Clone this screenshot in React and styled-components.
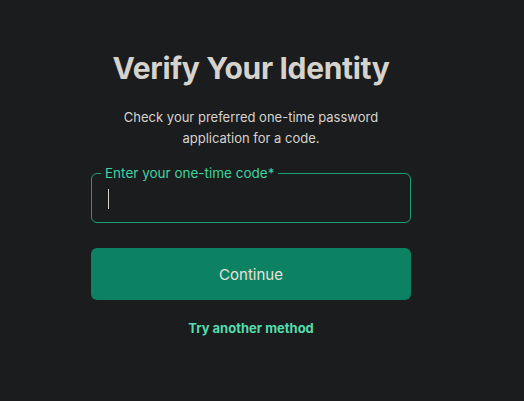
import React from "react";
import styled, { createGlobalStyle } from "styled-components";

const Global = createGlobalStyle`
  html, body {
    margin: 0;
    padding: 0;
    background: #1b1c1e;
    font-family: Inter, "Noto Sans", "Liberation Sans", sans-serif;
  }
`;

const Page = styled.main`
  min-height: 401px;
  display: flex;
  justify-content: center;
  padding-right: 22px;
  box-sizing: border-box;
`;

const Card = styled.section`
  width: 320px;
  display: flex;
  flex-direction: column;
  align-items: center;
  padding-top: 48px;
`;

const Title = styled.h1`
  margin: 0;
  font-size: 30px;
  font-weight: 700;
  line-height: 40px;
  color: #d6d3cd;
  letter-spacing: -0.35px;
`;

const Lead = styled.p`
  margin: 19px 0 0;
  font-size: 13px;
  line-height: 21px;
  color: #d6d3cd;
  text-align: center;
  width: 270px;
`;

const Field = styled.div`
  position: relative;
  margin-top: 24px;
  padding: 0 16px;
  width: 100%;
  height: 50px;
  box-sizing: border-box;
  border: 1px solid #1d9d76;
  border-radius: 6px;
  display: flex;
  align-items: center;
`;

/* floating label sits over the top border */
const Label = styled.label`
  position: absolute;
  top: -9px;
  left: 9px;
  padding: 0 4px;
  background: #1b1c1e;
  font-size: 13.5px;
  line-height: 16px;
  color: #40d3a0;
`;

const Caret = styled.span`
  display: block;
  width: 1px;
  height: 20px;
  background: #d6d3cd;
  margin-top: 2px;
`;

const Button = styled.button`
  margin-top: 25px;
  width: 100%;
  height: 52px;
  border: none;
  border-radius: 6px;
  background: #0d8262;
  color: #e6e3de;
  font-family: inherit;
  font-size: 15px;
  cursor: pointer;
`;

const Link = styled.a`
  margin-top: 20px;
  font-size: 13px;
  font-weight: 700;
  color: #55dcac;
  text-decoration: none;
`;

export default function App() {
  return (
    <>
      <Global />
      <Page>
        <Card>
          <Title>Verify Your Identity</Title>
          <Lead>Check your preferred one-time password application for a code.</Lead>
          <Field>
            <Label>Enter your one-time code*</Label>
            <Caret />
          </Field>
          <Button>Continue</Button>
          <Link href="#">Try another method</Link>
        </Card>
      </Page>
    </>
  );
}
